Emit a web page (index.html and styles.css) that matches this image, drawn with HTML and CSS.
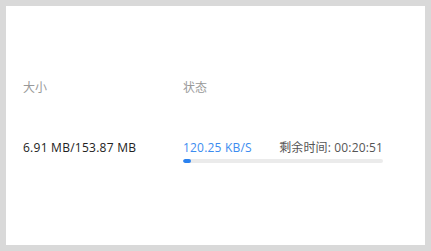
FILE: index.html
```html
<!DOCTYPE html>
<html>
<head>
    <title>下载任务</title>
    <link rel="stylesheet" href="styles.css">
</head>
<body>
    <div class="panel">
        <div class="row row-head">
            <div class="col col-size">大小</div>
            <div class="col col-status">状态</div>
        </div>
        <div class="row row-body">
            <div class="col col-size size-value">6.91 MB/153.87 MB</div>
            <div class="col col-status">
                <div class="status-line">
                    <span class="speed">120.25 KB/S</span>
                    <span class="remain">剩余时间: 00:20:51</span>
                </div>
                <div class="progress">
                    <div class="progress-fill" style="width: 4%;"></div>
                </div>
            </div>
        </div>
    </div>
</body>
</html>
```

FILE: styles.css
```css
html, body { margin: 0; padding: 0; }
body {
    background: #d9d9d9;
    padding: 6px;
    font-family: "Segoe UI", "Open Sans", "Noto Sans CJK SC", sans-serif;
    font-size: 12px;
    box-sizing: border-box;
    height: 251px;
}
.panel {
    background: #fff;
    height: 239px;
    padding: 0 17px;
    box-sizing: border-box;
}
.row { display: flex; }
.row-head {
    padding-top: 74px;
    color: #999;
    line-height: 16px;
}
.row-body {
    padding-top: 44px;
    line-height: 16px;
}
.col-size { width: 160px; }
.col-status { width: 200px; }
.size-value { color: #222; letter-spacing: 0.25px; }
.status-line {
    display: flex;
    justify-content: space-between;
}
.speed { color: #3c8cf0; letter-spacing: 0.2px; }
.remain { color: #555; letter-spacing: 0.15px; }
.progress {
    margin-top: 3px;
    height: 4px;
    background: #ebebeb;
    border-radius: 2px;
    overflow: hidden;
}
.progress-fill {
    height: 100%;
    background: #2a82f0;
    border-radius: 2px;
}
```
